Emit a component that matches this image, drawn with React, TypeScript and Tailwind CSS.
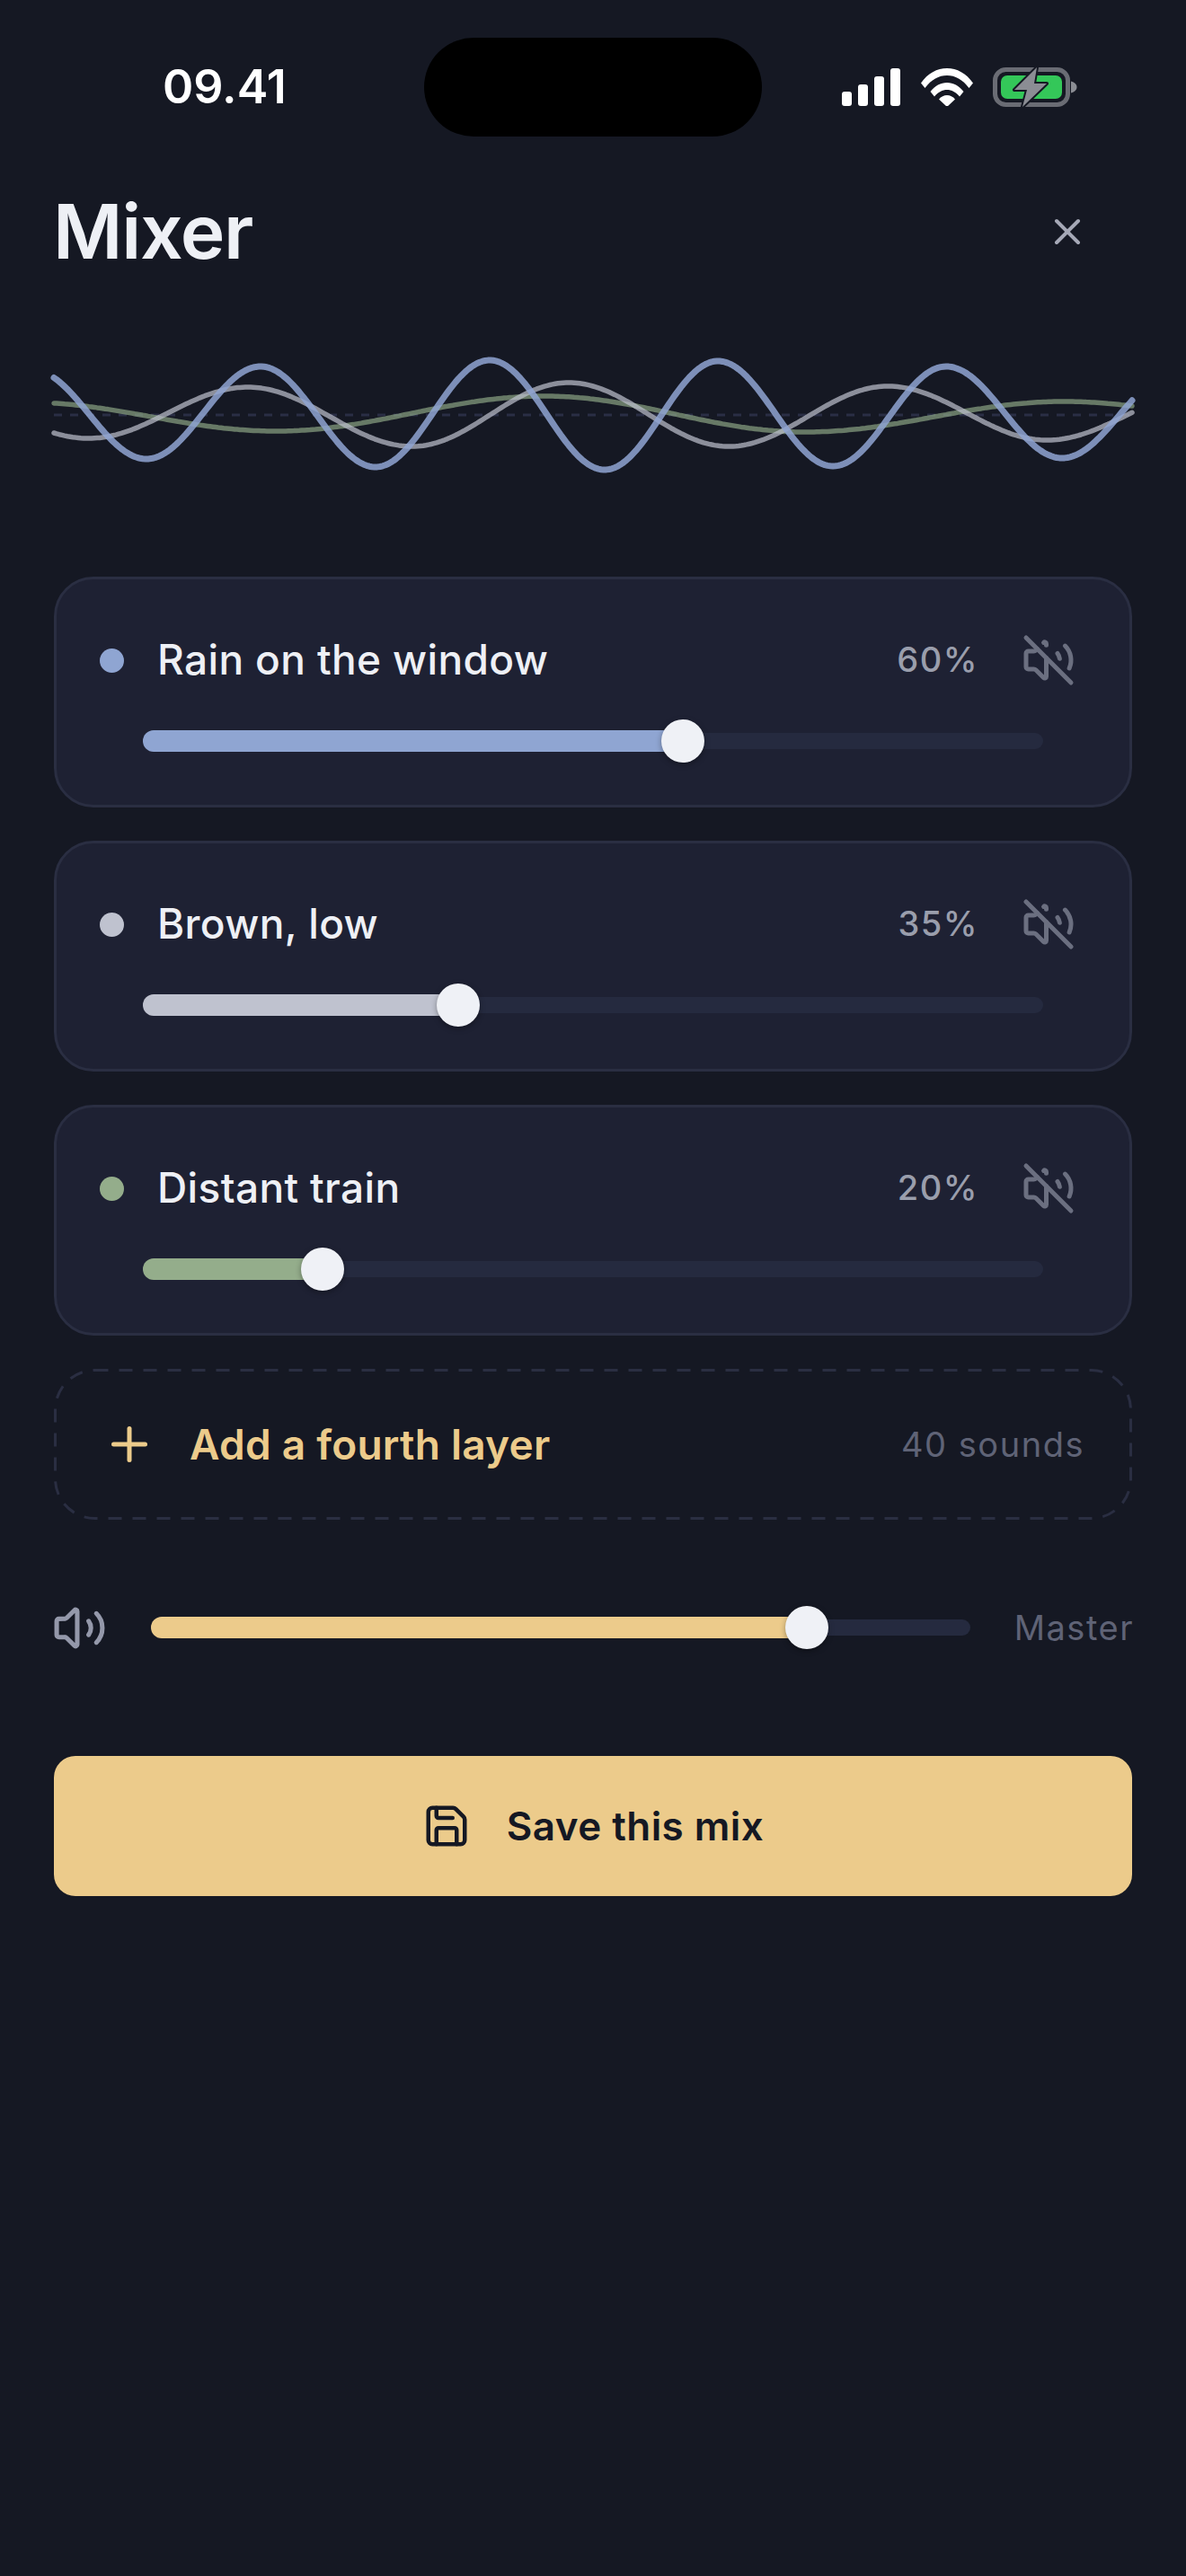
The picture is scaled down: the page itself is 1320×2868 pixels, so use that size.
import React from 'react';
import { Plus, Save, Volume2, VolumeOff, X } from 'lucide-react';

// sampled cosine between the crest and trough points of each wave
const buildWave = (pts: number[][], from = 60, to = 1261) => {
  const out: string[] = [];
  for (let x = from; x <= to; x += 3) {
    const i = pts.findIndex((p, n) => n < pts.length - 1 && x >= p[0] && x <= pts[n + 1][0]);
    const [x0, y0] = pts[i];
    const [x1, y1] = pts[i + 1];
    const t = (x - x0) / (x1 - x0);
    const y = y0 + ((y1 - y0) * (1 - Math.cos(Math.PI * t))) / 2;
    out.push(`${x} ${y.toFixed(1)}`);
  }
  return 'M' + out.join('L');
};

const blueWave = buildWave([[36, 412], [163, 511], [290, 408], [418, 520], [545, 401], [673, 523], [799, 402], [927, 519], [1053, 408], [1182, 510], [1310, 414]]);
const greyWave = buildWave([[-80, 435], [99, 488], [276, 431], [459, 497], [633, 426], [811, 497], [988, 430], [1165, 490], [1342, 435]]);
const greenWave = buildWave([[30, 448], [307, 480], [606, 441], [896, 481], [1184, 447], [1480, 480]]);

const layers = [
  { name: 'Rain on the window', value: 60, color: 'bg-[#8fa5d2]' },
  { name: 'Brown, low', value: 35, color: 'bg-[#bfc2cf]' },
  { name: 'Distant train', value: 20, color: 'bg-[#94ad8b]' },
];

const Slider: React.FC<{ value: number; color: string; className?: string }> = ({ value, color, className }) => (
  <div className={`relative flex h-12 items-center ${className ?? ''}`}>
    <div className="h-[18px] w-full rounded-full bg-[#252a3f]" />
    <div className={`absolute left-0 h-6 rounded-full ${color}`} style={{ width: `${value}%` }} />
    <div
      className="absolute size-12 -translate-x-1/2 rounded-full bg-[#eff1f6] shadow-[0_2px_6px_rgba(0,0,0,0.35)]"
      style={{ left: `${value}%` }}
    />
  </div>
);

const StatusIcons = () => (
  <div className="flex items-center">
    <svg width="66" height="42" viewBox="0 0 66 42" fill="#fff">
      <rect x="0" y="26" width="11" height="16" rx="3" />
      <rect x="18" y="18" width="11" height="24" rx="3" />
      <rect x="36" y="9" width="11" height="33" rx="3" />
      <rect x="54" y="0" width="11" height="42" rx="3" />
    </svg>
    <svg className="ml-[22px]" width="58" height="42" viewBox="0 0 58 42" fill="#fff">
      <path d="M0 16.500C7.500 5.500 18 0 29 0S50.500 5.500 58 16.500L53.500 22C46.500 12.500 38 8 29 8S11.500 12.500 4.500 22Z" />
      <path d="M10.500 26C15.500 19.500 22 16 29 16S42.500 19.500 47.500 26L43 31.500C39 26.500 34 24 29 24S19 26.500 15 31.500Z" />
      <path d="M20 34.500C22.500 31.500 25.500 30 29 30S35.500 31.500 38 34.500L29 43Z" />
    </svg>
    <svg className="ml-[22px]" width="94" height="46" viewBox="0 0 94 46">
      <rect x="2.500" y="3.500" width="81" height="39" rx="12" fill="none" stroke="#6a6c74" strokeWidth="5" />
      <rect x="9" y="10" width="68" height="26" rx="7" fill="#34c759" />
      <path d="M87 16.500C91 17.500 93.500 20 93.500 23S91 28.500 87 29.500Z" fill="#8b8d94" />
      <path d="M49 1 24 26H38L33 45 60 19H46Z" fill="#8b8d94" stroke="#151823" strokeWidth="4" strokeLinejoin="round" paintOrder="stroke" />
    </svg>
  </div>
);

export default function App() {
  return (
    <div className="flex h-[2868px] w-[1320px] flex-col overflow-hidden bg-[#151823] font-['Inter',sans-serif]">
      {/* Status bar */}
      <div className="flex pt-[42px]">
        <div className="flex h-[110px] w-[472px] items-center pl-[181px] text-[52px] font-semibold text-white">09.41</div>
        <div className="h-[110px] w-[376px] rounded-[55px] bg-black" />
        <div className="flex h-[110px] items-center pl-[89px]">
          <StatusIcons />
        </div>
      </div>

      {/* Header */}
      <div className="mt-[58px] flex h-24 items-center justify-between pl-[59px] pr-[108px]">
        <h1 className="text-[84px] leading-none font-semibold tracking-[-0.015em] text-[#eef0f5]">Mixer</h1>
        <X className="size-12 text-[#a5a8b6]" strokeWidth={2} />
      </div>

      {/* Waveform */}
      <svg className="mt-[74px] block h-[180px] w-[1320px] shrink-0" viewBox="0 380 1320 180" fill="none" strokeLinecap="round" strokeLinejoin="round">
        <line x1="60" y1="462" x2="1260" y2="462" stroke="#2a2e45" strokeWidth="3" strokeDasharray="9 9" strokeLinecap="butt" />
        <path d={greenWave} stroke="#94ad8b" strokeOpacity="0.65" strokeWidth="5.500" />
        <path d={greyWave} stroke="#bfc2cf" strokeOpacity="0.7" strokeWidth="5.500" />
        <path d={blueWave} stroke="#8fa5d2" strokeOpacity="0.85" strokeWidth="7" />
      </svg>

      <div className="mt-[82px] flex flex-col gap-[37px] px-[60px]">
        {/* Layer cards */}
        {layers.map((layer) => (
          <div key={layer.name} className="h-[257px] rounded-[44px] border-[3px] border-[#2a2e42] bg-[#1e2133] px-[48px] pt-[59px]">
            <div className="flex h-[60px] items-center">
              <div className={`mt-[2px] size-[27px] rounded-full ${layer.color}`} />
              <span className="ml-[37px] text-[46px] font-medium tracking-[0.008em] text-[#eef0f5]">{layer.name}</span>
              <span className="ml-auto text-[38px] font-medium tracking-[0.04em] text-[#9a9eac]">{layer.value}%</span>
              <VolumeOff className="mt-[2px] ml-[48px] mr-[12px] size-[60px] text-[#6b6f80]" strokeWidth={2} />
            </div>
            <Slider value={layer.value} color={layer.color} className="mx-[48px] mt-[37px]" />
          </div>
        ))}

        {/* Add layer */}
        <div className="relative flex h-[168px] items-center pl-[54px] pr-[53px]">
          <svg className="absolute inset-0" width="1200" height="168" viewBox="0 0 1200 168" fill="none">
            <rect x="1.500" y="1.500" width="1197" height="165" rx="44" stroke="#2a2e42" strokeWidth="3" strokeDasharray="15 12" />
          </svg>
          <Plus className="size-[60px] text-[#eccb8b]" strokeWidth={2} />
          <span className="ml-[37px] text-[46px] font-semibold tracking-[0.005em] text-[#eccb8b]">Add a fourth layer</span>
          <span className="ml-auto text-[38px] tracking-[0.04em] text-[#5f6376]">40 sounds</span>
        </div>
      </div>

      {/* Master */}
      <div className="mt-[90px] flex h-[60px] items-center px-[60px]">
        <Volume2 className="-ml-[2px] size-[61px] text-[#9498aa]" strokeWidth={2} />
        <Slider value={80} color="bg-[#eccb8b]" className="ml-[49px] w-[912px]" />
        <span className="ml-auto -mr-[2px] text-[38px] tracking-[0.04em] text-[#5f6376]">Master</span>
      </div>

      {/* Save */}
      <div className="px-[60px]">
        <button className="mt-[113px] flex h-[156px] w-full items-center justify-center gap-[40px] rounded-3xl bg-[#eccb8b] text-[44px] font-semibold tracking-[0.01em] text-[#151823]">
          <Save className="size-[54px]" strokeWidth={2} />
          Save this mix
        </button>
      </div>
    </div>
  );
}
